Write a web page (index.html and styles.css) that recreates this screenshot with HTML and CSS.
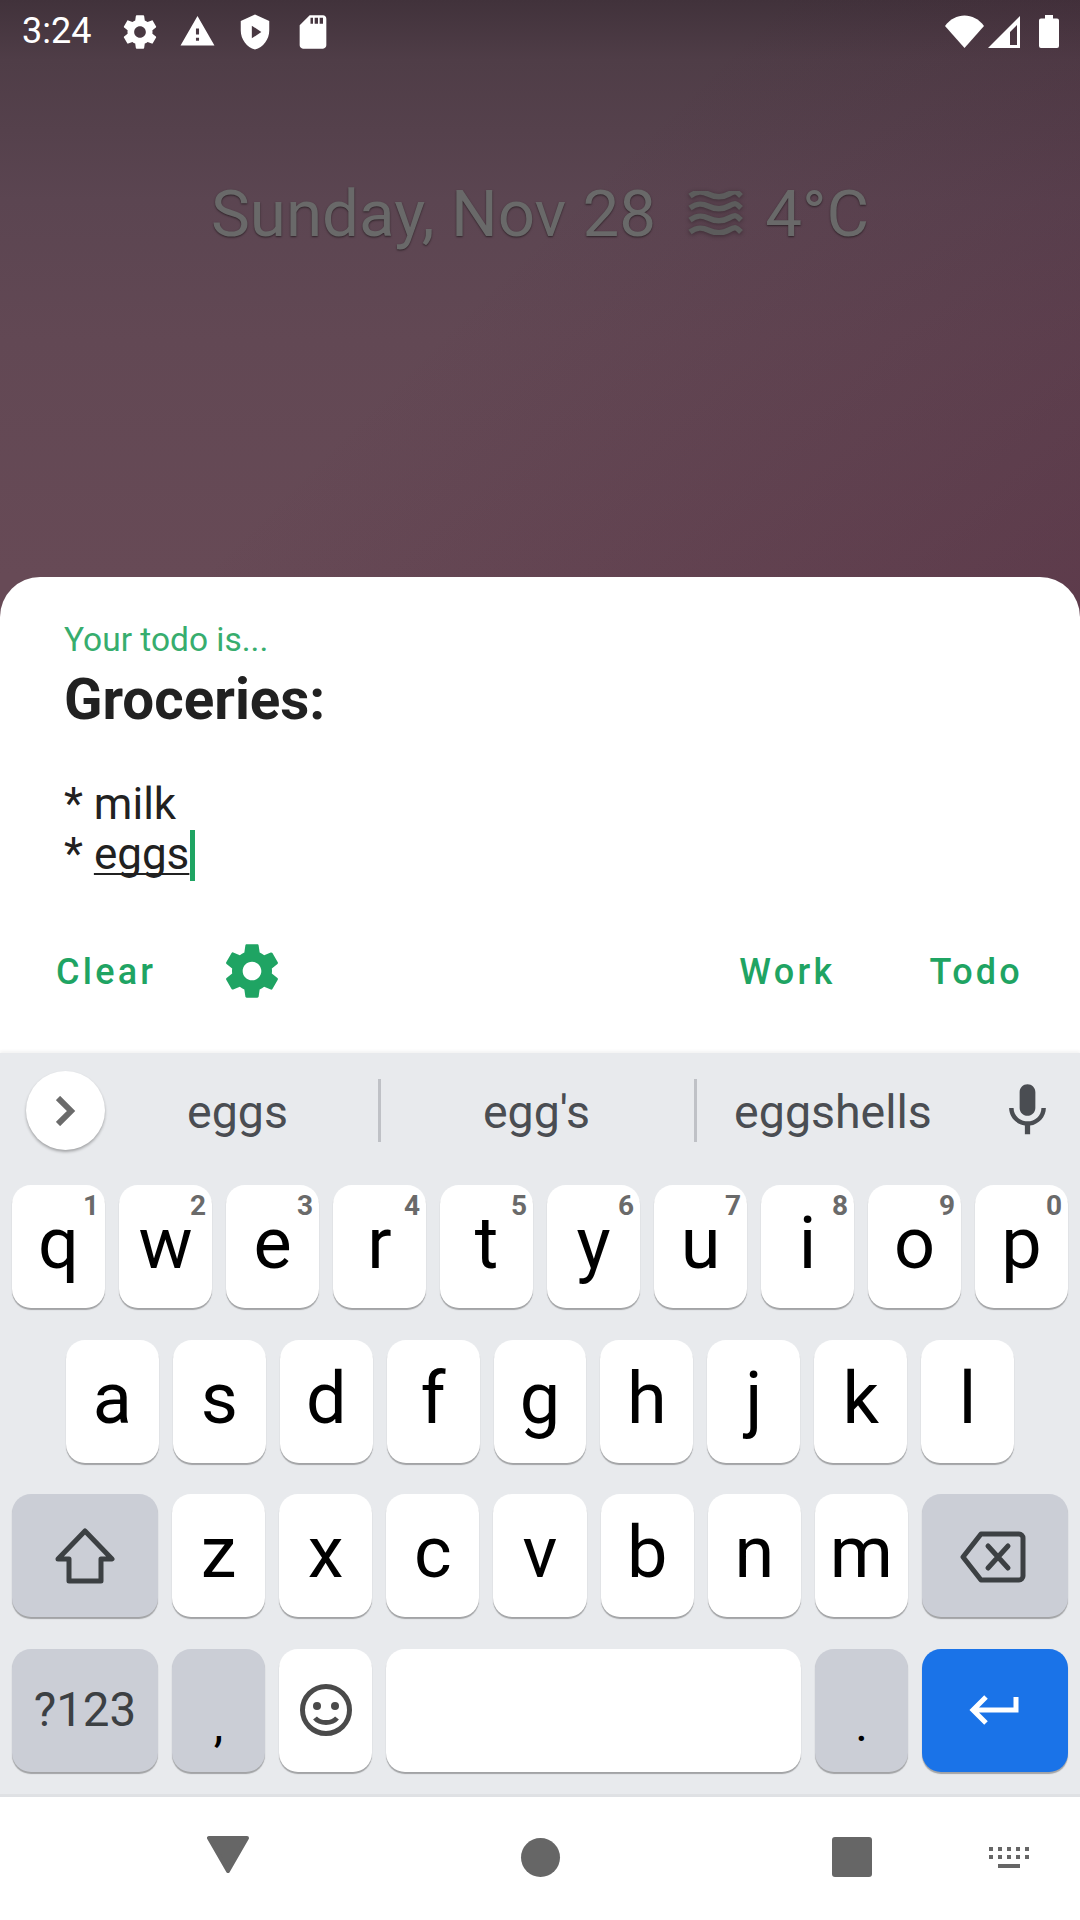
FILE: index.html
```html
<!DOCTYPE html>
<html>
  <head>
    <title>Todo</title>
    <meta name="viewport" content="width=device-width, initial-scale=1" />
    <link rel="stylesheet" href="styles.css">
  </head>
  <body>
    <div class="screen">
      <div class="wallpaper">
        <div class="statusBar">
          <span class="clock">3:24</span>
          <svg class="statusIcon gearIcon" viewBox="0 0 24 24"><path d="M19.43 12.98c.04-.32.07-.64.07-.98s-.03-.66-.07-.98l2.11-1.65c.19-.15.24-.42.12-.64l-2-3.46c-.12-.22-.39-.3-.61-.22l-2.49 1c-.52-.4-1.08-.73-1.69-.98l-.38-2.65C14.46 2.18 14.25 2 14 2h-4c-.25 0-.46.18-.49.42l-.38 2.65c-.61.25-1.17.59-1.69.98l-2.49-1c-.23-.09-.49 0-.61.22l-2 3.46c-.13.22-.07.49.12.64l2.11 1.65c-.04.32-.07.65-.07.98s.03.66.07.98l-2.11 1.65c-.19.15-.24.42-.12.64l2 3.46c.12.22.39.3.61.22l2.49-1c.52.4 1.08.73 1.69.98l.38 2.65c.03.24.24.42.49.42h4c.25 0 .46-.18.49-.42l.38-2.65c.61-.25 1.17-.59 1.69-.98l2.49 1c.23.09.49 0 .61-.22l2-3.46c.12-.22.07-.49-.12-.64l-2.11-1.65zM12 15.5c-1.93 0-3.5-1.57-3.5-3.5s1.57-3.5 3.5-3.5 3.5 1.57 3.5 3.5-1.57 3.5-3.5 3.5z"/></svg>
          <svg class="statusIcon alertIcon" viewBox="0 0 24 24"><path d="M1 21h22L12 2 1 21zm12-3h-2v-2h2v2zm0-4h-2v-4h2v4z"/></svg>
          <svg class="statusIcon shieldIcon" viewBox="0 0 24 24"><path fill-rule="evenodd" d="M12 1 3 5v6c0 5.55 3.84 10.74 9 12 5.16-1.26 9-6.45 9-12V5l-9-4zM10 8v8l6-4z"/></svg>
          <svg class="statusIcon sdIcon" viewBox="0 0 24 24"><path fill-rule="evenodd" d="M18 2h-8L4 8v12c0 1.1.9 2 2 2h12c1.1 0 2-.9 2-2V4c0-1.1-.9-2-2-2zM12 7h-1.5V3.5H12zm3 0h-2V3.5h2zm3 0h-2V3.5h2z"/></svg>
          <div class="statusRight">
            <svg class="wifiIcon" viewBox="0 0 39 33"><path d="M0 11C10-3 29-3 39 11L19.5 33Z"/></svg>
            <svg class="signalIcon" viewBox="0 0 32 33"><path fill-rule="evenodd" d="M0 33 32 1V33ZM22 17 29 10V30H22Z"/></svg>
            <svg class="batteryIcon" viewBox="0 0 20 33"><path d="M6 0H14V3.5H18A2 2 0 0 1 20 5.5V31A2 2 0 0 1 18 33H2A2 2 0 0 1 0 31V5.5A2 2 0 0 1 2 3.5H6Z"/></svg>
          </div>
        </div>
        <div class="dateLine">
          <span>Sunday, Nov 28</span>
          <svg class="fogIcon" viewBox="0 0 55 44">
            <path d="M2 5C9 0 14 0 20 3S34 7 41 3 49 1 53 5"/>
            <path d="M2 17C9 12 14 12 20 15S34 19 41 15 49 13 53 17"/>
            <path d="M2 29C9 24 14 24 20 27S34 31 41 27 49 25 53 29"/>
            <path d="M2 41C9 36 14 36 20 39S34 43 41 39 49 37 53 41"/>
          </svg>
          <span>4°C</span>
        </div>
      </div>

      <div class="sheet">
        <div class="todoLabel">Your todo is...</div>
        <div class="todoTitle">Groceries:</div>
        <div class="todoLine firstLine">* milk</div>
        <div class="todoLine">* <span class="composing">eggs</span><span class="cursor"></span></div>
        <div class="actions">
          <span class="action">Clear</span>
          <svg class="actionGear" viewBox="0 0 24 24"><path d="M19.43 12.98c.04-.32.07-.64.07-.98s-.03-.66-.07-.98l2.11-1.65c.19-.15.24-.42.12-.64l-2-3.46c-.12-.22-.39-.3-.61-.22l-2.49 1c-.52-.4-1.08-.73-1.69-.98l-.38-2.65C14.46 2.18 14.25 2 14 2h-4c-.25 0-.46.18-.49.42l-.38 2.65c-.61.25-1.17.59-1.69.98l-2.49-1c-.23-.09-.49 0-.61.22l-2 3.46c-.13.22-.07.49.12.64l2.11 1.65c-.04.32-.07.65-.07.98s.03.66.07.98l-2.11 1.65c-.19.15-.24.42-.12.64l2 3.46c.12.22.39.3.61.22l2.49-1c.52.4 1.08.73 1.69.98l.38 2.65c.03.24.24.42.49.42h4c.25 0 .46-.18.49-.42l.38-2.65c.61-.25 1.17-.59 1.69-.98l2.49 1c.23.09.49 0 .61-.22l2-3.46c.12-.22.07-.49-.12-.64l-2.11-1.65zM12 15.5c-1.93 0-3.5-1.57-3.5-3.5s1.57-3.5 3.5-3.5 3.5 1.57 3.5 3.5-1.57 3.5-3.5 3.5z"/></svg>
          <span class="action workAction">Work</span>
          <span class="action todoAction">Todo</span>
        </div>
      </div>

      <div class="keyboard">
        <div class="suggestions">
          <div class="expandButton">
            <svg viewBox="0 0 20 30"><path d="M2 2 15 15 2 28"/></svg>
          </div>
          <div class="suggestion firstSuggestion">eggs</div>
          <div class="suggestion middleSuggestion">egg's</div>
          <div class="suggestion lastSuggestion">eggshells</div>
          <svg class="micIcon" viewBox="0 0 24 24"><path d="M12 14c1.66 0 2.99-1.34 2.99-3L15 5c0-1.66-1.34-3-3-3S9 3.34 9 5v6c0 1.66 1.34 3 3 3zm5.3-3c0 3-2.54 5.1-5.3 5.1S6.7 14 6.7 11H5c0 3.41 2.72 6.23 6 6.72V21h2v-3.28c3.28-.48 6-3.3 6-6.72h-1.7z"/></svg>
        </div>

        <div class="keyRow">
          <div class="key">q<span class="hint">1</span></div>
          <div class="key">w<span class="hint">2</span></div>
          <div class="key">e<span class="hint">3</span></div>
          <div class="key">r<span class="hint">4</span></div>
          <div class="key">t<span class="hint">5</span></div>
          <div class="key">y<span class="hint">6</span></div>
          <div class="key">u<span class="hint">7</span></div>
          <div class="key">i<span class="hint">8</span></div>
          <div class="key">o<span class="hint">9</span></div>
          <div class="key">p<span class="hint">0</span></div>
        </div>
        <div class="keyRow middleRow">
          <div class="key">a</div>
          <div class="key">s</div>
          <div class="key">d</div>
          <div class="key">f</div>
          <div class="key">g</div>
          <div class="key">h</div>
          <div class="key">j</div>
          <div class="key">k</div>
          <div class="key">l</div>
        </div>
        <div class="keyRow">
          <div class="key special wide">
            <svg class="shiftIcon" viewBox="0 0 60 56"><path d="M30 3 57 31H46V53H14V31H3Z"/></svg>
          </div>
          <div class="key">z</div>
          <div class="key">x</div>
          <div class="key">c</div>
          <div class="key">v</div>
          <div class="key">b</div>
          <div class="key">n</div>
          <div class="key">m</div>
          <div class="key special wide">
            <svg class="backspaceIcon" viewBox="0 0 66 52"><path d="M21 3H59A4 4 0 0 1 63 7V45A4 4 0 0 1 59 49H21L3 26Z"/><path d="M28 15 48 37M48 15 28 37"/></svg>
          </div>
        </div>
        <div class="keyRow">
          <div class="key special wide symbols">?123</div>
          <div class="key special punct">,</div>
          <div class="key">
            <svg class="emojiIcon" viewBox="0 0 52 52">
              <circle class="emojiFace" cx="26" cy="26" r="23.5"/>
              <circle cx="17" cy="22" r="4"/>
              <circle cx="35" cy="22" r="4"/>
              <path class="emojiFace" d="M15 34C20 40 32 40 37 34"/>
            </svg>
          </div>
          <div class="key spaceKey"></div>
          <div class="key special punct">.</div>
          <div class="key wide enterKey">
            <svg class="enterIcon" viewBox="0 0 50 30"><path d="M47 2V15H5M17 2 4 15 17 28"/></svg>
          </div>
        </div>
      </div>

      <div class="navBar">
        <svg class="navBack" viewBox="0 0 42 37"><path d="M2 2H40L21 35Z"/></svg>
        <div class="navHome"></div>
        <div class="navRecent"></div>
        <svg class="navKeyboard" viewBox="0 0 40 21">
          <rect x="0" y="0" width="4" height="4"/><rect x="9" y="0" width="4" height="4"/><rect x="18" y="0" width="4" height="4"/><rect x="27" y="0" width="4" height="4"/><rect x="36" y="0" width="4" height="4"/>
          <rect x="0" y="8" width="4" height="4"/><rect x="9" y="8" width="4" height="4"/><rect x="18" y="8" width="4" height="4"/><rect x="27" y="8" width="4" height="4"/><rect x="36" y="8" width="4" height="4"/>
          <rect x="9" y="17" width="22" height="4"/>
        </svg>
      </div>
    </div>
  </body>
</html>
```

FILE: styles.css
```css
body {
  margin: 0;
  font-family: Roboto, "Noto Sans", sans-serif;
}

.screen {
  width: 1080px;
  height: 1920px;
  display: flex;
  flex-direction: column;
  overflow: hidden;
  background:
    linear-gradient(135deg, rgba(70, 25, 50, 0) 45%, rgba(70, 25, 50, 0.3) 100%) 0 0 / 100% 620px no-repeat,
    linear-gradient(180deg, #41323b 0, #4f3d47 60px, #5b4551 200px, #624854 340px, #674a56 577px);
}

.wallpaper {
  height: 577px;
  flex: none;
}

.statusBar {
  height: 63px;
  padding-left: 22px;
  display: flex;
  align-items: center;
  color: #fff;
  fill: #fff;
}

.clock {
  font-size: 36px;
  line-height: 65px;
  width: 92px;
}

.statusIcon {
  flex: none;
}

.gearIcon {
  width: 40px;
  height: 40px;
  margin: 0 0 0 6px;
}

.alertIcon {
  width: 37px;
  height: 37px;
  margin-left: 19px;
}

.shieldIcon {
  width: 38px;
  height: 38px;
  margin-left: 20px;
}

.sdIcon {
  width: 40px;
  height: 40px;
  margin-left: 19px;
}

.statusRight {
  margin-left: auto;
  margin-right: 21px;
  display: flex;
  align-items: center;
}

.wifiIcon {
  width: 39px;
  height: 33px;
}

.signalIcon {
  width: 32px;
  height: 33px;
  margin-left: 4px;
}

.batteryIcon {
  width: 20px;
  height: 33px;
  margin-left: 19px;
}

.dateLine {
  margin-top: 116px;
  display: flex;
  justify-content: center;
  align-items: center;
  font-size: 65.5px;
  line-height: 70px;
  color: #696969;
  text-shadow: 0 1px 2px rgba(0, 0, 0, 0.5);
}

.fogIcon {
  width: 55px;
  height: 44px;
  margin: -2px 22px 0 32px;
  fill: none;
  stroke: #5c5c5c;
  stroke-width: 5.5;
  filter: drop-shadow(0 1px 2px rgba(0, 0, 0, 0.35));
}

.sheet {
  height: 476px;
  flex: none;
  box-sizing: border-box;
  padding: 43px 0 0 64px;
  background: #fff;
  border-radius: 40px 40px 0 0;
}

.todoLabel {
  font-size: 33.5px;
  line-height: 40px;
  color: #37ad6e;
}

.todoTitle {
  margin-top: 15px;
  font-size: 56.5px;
  line-height: 50px;
  font-weight: 700;
  color: #212121;
}

.todoLine {
  font-size: 44px;
  line-height: 50px;
  color: #212121;
}

.firstLine {
  margin-top: 54px;
}

.composing {
  text-decoration: underline;
  text-decoration-thickness: 2px;
  text-decoration-skip-ink: none;
  text-underline-offset: 4px;
}

.cursor {
  display: inline-block;
  width: 5px;
  height: 51px;
  margin-left: 1px;
  vertical-align: -12px;
  background: #1fa463;
}

.actions {
  margin: 66px 57px 0 -8px;
  display: flex;
  align-items: center;
  height: 50px;
}

.action {
  font-size: 36px;
  font-weight: 500;
  letter-spacing: 0.09em;
  color: #1fa463;
}

.actionGear {
  width: 64px;
  height: 64px;
  margin: -3px 0 0 64px;
  fill: #1fa463;
}

.workAction {
  margin-left: auto;
}

.todoAction {
  margin-left: 94px;
}

.keyboard {
  height: 744px;
  flex: none;
  box-sizing: border-box;
  padding: 0 12px;
  background: #e8eaed;
  border-bottom: 3px solid #dfe1e4;
  box-shadow: 0 -2px 3px rgba(0, 0, 0, 0.05);
  display: flex;
  flex-direction: column;
  gap: 30.67px;
}

.suggestions {
  height: 101.33px;
  margin: 0 -12px;
  padding-left: 26px;
  display: flex;
  align-items: flex-start;
  flex: none;
  color: #4a4d52;
}

.expandButton {
  width: 79px;
  height: 79px;
  margin-top: 18px;
  flex: none;
  display: flex;
  justify-content: center;
  align-items: center;
  background: #fff;
  border-radius: 50%;
  box-shadow: 0 2px 3px rgba(0, 0, 0, 0.3);
}

.expandButton svg {
  width: 20px;
  height: 30px;
  fill: none;
  stroke: #6b6b6b;
  stroke-width: 6;
}

.suggestion {
  margin-top: 26px;
  height: 63px;
  line-height: 66px;
  font-size: 46.5px;
  text-align: center;
  flex: none;
}

.firstSuggestion {
  width: 281px;
  margin-left: -8px;
  border-right: 3px solid #bfc1c6;
}

.middleSuggestion {
  width: 311px;
  padding-right: 2px;
  border-right: 3px solid #bfc1c6;
}

.lastSuggestion {
  width: 272px;
}

.micIcon {
  width: 63px;
  height: 63px;
  margin: 26px 0 0 27px;
  flex: none;
  fill: #4a4d52;
}

.keyRow {
  height: 124px;
  flex: none;
  display: flex;
  align-items: flex-start;
  gap: 14px;
}

.middleRow {
  padding: 0 54px;
}

.key {
  position: relative;
  flex: 1 1 0;
  min-width: 0;
  height: 123px;
  box-sizing: border-box;
  padding-bottom: 6px;
  display: flex;
  justify-content: center;
  align-items: center;
  background: #fff;
  border-radius: 19px;
  box-shadow: 0 2px 1px rgba(0, 0, 0, 0.3);
  font-size: 72px;
  color: #000;
}

.hint {
  position: absolute;
  top: 3px;
  right: 6px;
  font-size: 28px;
  line-height: 36px;
  font-weight: 700;
  color: #6a6a6a;
}

.special {
  background: #cbced6;
}

.wide {
  flex: 0 0 146px;
  padding-bottom: 0;
}

.symbols {
  font-size: 47.5px;
  color: #3c4043;
}

.punct {
  flex: 0 0 93px;
  padding: 28px 0 0;
  font-size: 48px;
}

.spaceKey {
  flex: 0 0 415px;
}

.enterKey {
  background: #1a73e8;
}

.shiftIcon,
.backspaceIcon {
  fill: none;
  stroke: #3c4043;
  stroke-width: 5;
  stroke-linejoin: round;
  stroke-linecap: round;
}

.shiftIcon {
  width: 60px;
  height: 56px;
}

.backspaceIcon {
  width: 66px;
  height: 52px;
  margin: 2px 3px 0 0;
}

.emojiIcon {
  width: 52px;
  height: 52px;
  margin-top: 6px;
  fill: #4a4a4a;
}

.emojiFace {
  fill: none;
  stroke: #4a4a4a;
  stroke-width: 5;
}

.enterIcon {
  width: 50px;
  height: 30px;
  margin-right: 3px;
  fill: none;
  stroke: #fff;
  stroke-width: 5;
}

.navBar {
  flex: 1;
  background: #fff;
  display: flex;
  align-items: center;
  padding-left: 207px;
  padding-bottom: 3px;
}

.navBack {
  width: 42px;
  height: 37px;
  margin-top: -5px;
  fill: #666;
  stroke: #666;
  stroke-width: 4;
  stroke-linejoin: round;
}

.navHome {
  width: 39px;
  height: 39px;
  margin-left: 272px;
  background: #666;
  border-radius: 50%;
}

.navRecent {
  width: 40px;
  height: 40px;
  margin-left: 272px;
  background: #666;
  border-radius: 3px;
}

.navKeyboard {
  width: 40px;
  height: 21px;
  margin-left: 117px;
  fill: #666;
}
```
